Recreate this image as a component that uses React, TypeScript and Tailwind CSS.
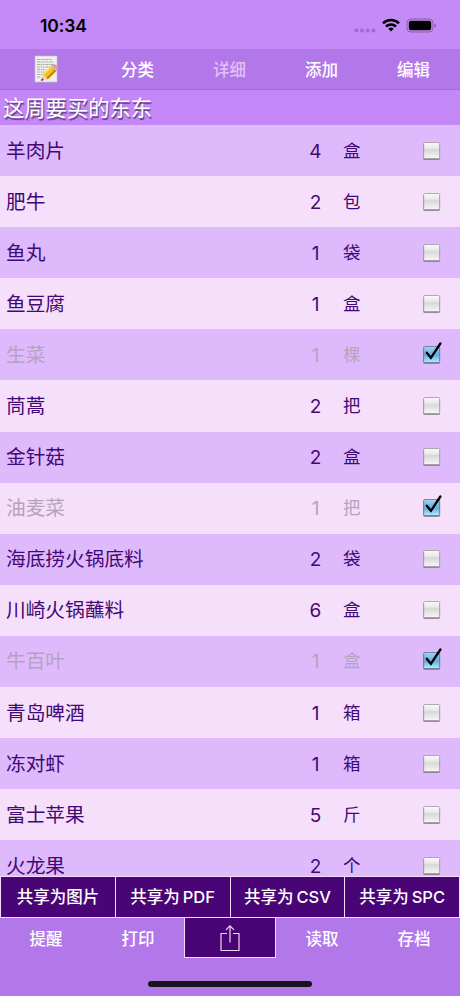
import clsx from "clsx";

type Item = { name: string; qty: number; unit: string; done?: boolean };

const ITEMS: Item[] = [
  { name: "羊肉片", qty: 4, unit: "盒" },
  { name: "肥牛", qty: 2, unit: "包" },
  { name: "鱼丸", qty: 1, unit: "袋" },
  { name: "鱼豆腐", qty: 1, unit: "盒" },
  { name: "生菜", qty: 1, unit: "棵", done: true },
  { name: "茼蒿", qty: 2, unit: "把" },
  { name: "金针菇", qty: 2, unit: "盒" },
  { name: "油麦菜", qty: 1, unit: "把", done: true },
  { name: "海底捞火锅底料", qty: 2, unit: "袋" },
  { name: "川崎火锅蘸料", qty: 6, unit: "盒" },
  { name: "牛百叶", qty: 1, unit: "盒", done: true },
  { name: "青岛啤酒", qty: 1, unit: "箱" },
  { name: "冻对虾", qty: 1, unit: "箱" },
  { name: "富士苹果", qty: 5, unit: "斤" },
  { name: "火龙果", qty: 2, unit: "个" },
];

const SHARE_TARGETS = ["图片", "PDF", "CSV", "SPC"];

function StatusBar() {
  return (
    <div className="flex h-[49px] shrink-0 items-center bg-[#c48af8] pr-[23px] pl-10 text-black">
      <span className="pt-[3px] text-[17.5px] font-semibold tracking-[-0.1px]">10:34</span>
      <div className="ml-auto flex items-center gap-[6px] pt-px">
        <svg width="22" height="5" viewBox="0 0 22 5" className="mt-[10px]" fill="#a568d3">
          <circle cx="2.3" cy="2.5" r="2" />
          <circle cx="8" cy="2.5" r="2" />
          <circle cx="13.7" cy="2.5" r="2" />
          <circle cx="19.4" cy="2.5" r="2" />
        </svg>
        <svg width="18" height="14" viewBox="0 0 18 14" fill="none" stroke="black" strokeWidth="2.5">
          <path d="M1 5.3a11.5 11.5 0 0 1 16 0" />
          <path d="M4 8.5a7.2 7.2 0 0 1 10 0" />
          <path d="M9 13.5 6.3 10.8a4 4 0 0 1 5.4 0Z" fill="black" stroke="none" />
        </svg>
        <svg width="31" height="15" viewBox="0 0 31 15">
          <rect x="1" y="1" width="26" height="13" rx="4" fill="none" stroke="#89609f" />
          <rect x="2.8" y="2.8" width="22.4" height="9.4" rx="2.3" fill="black" />
          <path d="M28.5 5.3v4.4c2-.8 2-3.6 0-4.4Z" fill="#89609f" />
        </svg>
      </div>
    </div>
  );
}

function NoteIcon() {
  return (
    <svg width="24" height="28" viewBox="0 0 24 28">
      <rect x="1" y="1" width="22" height="26" fill="#eeeeeb" stroke="#c7bfcd" strokeWidth="0.6" />
      <g stroke="#8d8d88" strokeWidth="0.7" strokeDasharray="3 .6 1.5 .5 2 .8">
        <path d="M3 4.5h15M3 7h17M3 9.5h16M3 12h13M3 14.5h9M3 17h8M3 19.5h6M3 22h4" />
      </g>
      <path d="m7 26 1.7-7 5.2 5.3Z" fill="#efd5a4" />
      <path d="m7 26 .9-3 2 2.1Z" fill="#4a4036" />
      <path d="m8.7 19 9.1-8.6 5 5-8.9 8.9Z" fill="#f6bd23" />
      <path d="m12.4 22.8 9-8.8 1.4 1.4-8.9 8.9Z" fill="#c97f13" />
      <path d="m8.7 19 9.1-8.6 1.2 1.2-9.1 8.6Z" fill="#ffdc58" />
      <path d="m17 11.2 1.3-1.2 5 5-1.3 1.2Z" fill="#b9b9c3" />
      <path d="m18.3 10 .8-.6c1.8-1.3 5.9 2.4 4.7 4.6l-.6.9Z" fill="#ef8ca2" />
    </svg>
  );
}

function Toolbar() {
  return (
    <div className="grid h-[41px] shrink-0 grid-cols-5 place-items-center border-b border-[#a469d8] bg-[#b277e8] text-[16.5px] font-medium text-white">
      <NoteIcon />
      <span className="pt-[2px] pr-px">分类</span>
      <span className="pt-[2px] pr-px text-[#dfc2f5]">详细</span>
      <span className="pt-[2px] pr-px">添加</span>
      <span className="pt-[2px] pr-px">编辑</span>
    </div>
  );
}

function Checkbox({ checked }: { checked?: boolean }) {
  return (
    <svg width="22" height="24" viewBox="0 0 22 24" className="mt-[-2px]">
      <defs>
        <linearGradient id="boxOff" x1="0" y1="0" x2="0" y2="1">
          <stop offset="0" stopColor="#fafafa" />
          <stop offset="0.35" stopColor="#e9e9e9" />
          <stop offset="0.45" stopColor="#d8d8d8" />
          <stop offset="1" stopColor="#f7f7f7" />
        </linearGradient>
        <linearGradient id="boxOn" x1="0" y1="0" x2="0" y2="1">
          <stop offset="0" stopColor="#a6d4f1" />
          <stop offset="0.4" stopColor="#72b6e4" />
          <stop offset="0.55" stopColor="#64aedf" />
          <stop offset="1" stopColor="#b5efff" />
        </linearGradient>
      </defs>
      <rect x="2.2" y="5.6" width="16.8" height="16.4" rx="1.5" fill="#76727c" opacity="0.75" />
      <rect
        x="2.7"
        y="4.5"
        width="16"
        height="16"
        rx="1"
        fill={checked ? "url(#boxOn)" : "url(#boxOff)"}
        stroke={checked ? "#58758e" : "#9a98a0"}
        strokeWidth="0.8"
      />
      {checked && (
        <path d="m5.8 10.7 4.1 5.2L19.4 1.5" fill="none" stroke="black" strokeWidth="2.3" strokeLinecap="round" />
      )}
    </svg>
  );
}

function ItemRow({ item }: { item: Item }) {
  return (
    <li
      className={clsx(
        "flex h-[51.1px] shrink-0 items-center pl-[6px] leading-none odd:bg-[#debafd] even:bg-[#f6dffb]",
        item.done ? "text-[#b5a3bd]" : "text-[#420875]",
      )}
    >
      <span className="w-[300px] pt-px text-[19.7px] leading-[19px]">{item.name}</span>
      <span className="w-[19px] pt-px text-center text-[19px] leading-[19px]">{item.qty}</span>
      <span className="ml-[18px] w-[78px] text-[17.5px] leading-[18px]">{item.unit}</span>
      <Checkbox checked={item.done} />
    </li>
  );
}

function ShareBar() {
  return (
    <div className="grid h-[42px] shrink-0 grid-cols-4 gap-px border border-[#f3dcfa] bg-[#f3dcfa] text-[16.5px] font-medium text-white">
      {SHARE_TARGETS.map((target) => (
        <div key={target} className="flex items-center justify-center gap-[3px] bg-[#490475]">
          <span>{target === "图片" ? "共享为图片" : "共享为"}</span>
          {target !== "图片" && <span>{target}</span>}
        </div>
      ))}
    </div>
  );
}

function BottomBar() {
  return (
    <div className="grid h-10 shrink-0 grid-cols-5 text-[16.5px] font-medium text-white">
      <span className="grid place-items-center pt-[2px]">提醒</span>
      <span className="grid place-items-center pt-[2px]">打印</span>
      <span className="grid place-items-center border border-t-0 border-[#f3dcfa] bg-[#490475]">
        <svg width="22" height="28" viewBox="0 0 22 28" fill="none" stroke="#e9d7f2" strokeWidth="1.2">
          <path d="M8 9.5H2v17h18v-17h-6M11 18.5V2M7 5.8 11 1.8l4 4" />
        </svg>
      </span>
      <span className="grid place-items-center pt-[2px]">读取</span>
      <span className="grid place-items-center pt-[2px]">存档</span>
    </div>
  );
}

export default function App() {
  return (
    <div className="flex h-[996px] w-[460px] flex-col overflow-hidden bg-[#b277e8] font-['Inter','Noto_Sans_CJK_SC',sans-serif]">
      <StatusBar />
      <Toolbar />
      <h1 className="flex h-[35px] shrink-0 items-center bg-[#c487f8] pt-[3px] pl-[3px] text-[21.3px] text-white [text-shadow:1px_2px_1px_#60407c]">
        这周要买的东东
      </h1>
      <ul className="flex h-[751px] shrink-0 flex-col overflow-hidden">
        {ITEMS.map((item) => (
          <ItemRow key={item.name} item={item} />
        ))}
      </ul>
      <ShareBar />
      <BottomBar />
      <div className="mx-auto mt-[23px] h-[6px] w-[164px] rounded-full bg-[#18121d]" />
    </div>
  );
}
